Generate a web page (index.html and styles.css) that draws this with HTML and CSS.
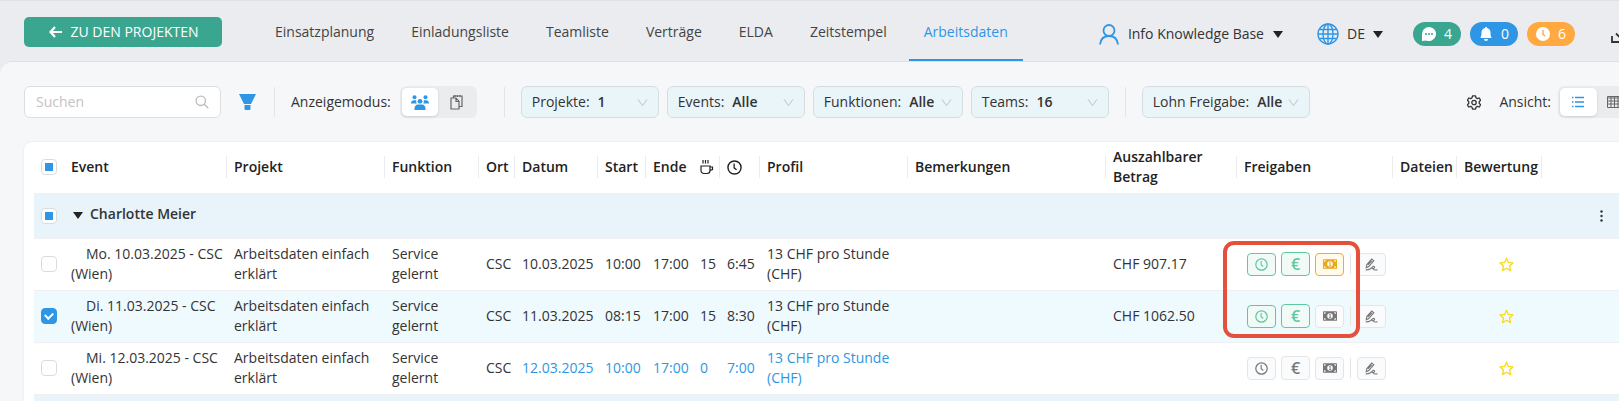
FILE: index.html
```html
<!DOCTYPE html>
<html lang="de">
<head>
    <meta charset="UTF-8">
    <meta name="viewport" content="width=device-width, initial-scale=1.0">
    <title>Arbeitsdaten</title>
    <link rel="stylesheet" href="styles.css">
</head>
<body>

<!-- shared icons -->
<svg class="sprite" aria-hidden="true">
    <symbol id="i-clock" viewBox="0 0 16 16">
        <circle cx="8" cy="8" r="7" fill="none" stroke="currentColor" stroke-width="1.5"/>
        <path d="M7.6 3.8v4.6l2.6 2" fill="none" stroke="currentColor" stroke-width="1.4"/>
    </symbol>
    <symbol id="i-cash" viewBox="0 0 16 11">
        <path fill="currentColor" fill-rule="evenodd" d="M1 0h14a1 1 0 0 1 1 1v9a1 1 0 0 1-1 1H1a1 1 0 0 1-1-1V1a1 1 0 0 1 1-1zM1.3 1.3v1.9a1.9 1.9 0 0 0 1.9-1.9zM14.7 1.3h-1.9a1.9 1.9 0 0 0 1.9 1.9zM1.3 9.7h1.9a1.9 1.9 0 0 0-1.9-1.9zM14.7 9.7V7.8a1.9 1.9 0 0 0-1.9 1.9zM8 2.3a3.2 3.2 0 1 0 0 6.4a3.2 3.2 0 0 0 0-6.4z"/>
        <path d="M7 4.2l1.2-.7v3.500M7 7.200h2.300" fill="none" stroke="currentColor"/>
    </symbol>
    <symbol id="i-sign" viewBox="0 0 16 16">
        <path d="M1.500 12l.8-4L8.300 1.300l2.500 2.200-6.200 7zM3.600 8.500l4.800-5M1 14.600c4 .4 6.200-1.400 8-3.400 1.800-2 3.600-.6 2.400 1-1 1.400-3.200 1.500-2.400-.2M10 14.200c1.500.6 3.500.6 5.500.3" fill="none" stroke="currentColor" stroke-width="1.400"/>
    </symbol>
    <symbol id="i-star" viewBox="0 0 16 16">
        <path d="M8 1.300l2 4.500 4.900.5-3.700 3.300 1.100 4.900L8 12l-4.300 2.500 1.100-4.900L1.100 6.300 6 5.800z" fill="none" stroke="currentColor" stroke-width="1.400" stroke-linejoin="round"/>
    </symbol>
    <symbol id="i-down" viewBox="0 0 12 10">
        <path d="M1 1.500l5 7 5-7" fill="none" stroke="currentColor"/>
    </symbol>
    <symbol id="i-caret" viewBox="0 0 10 7">
        <path d="M0 0h10L5 7z" fill="currentColor"/>
    </symbol>
</svg>

<div class="app">
    <header class="topbar">
        <button class="back" type="button">
            <svg width="13" height="12" viewBox="0 0 13 12"><path d="M6 1L1.500 6 6 11M2 6h11" fill="none" stroke="currentColor" stroke-width="2.200"/></svg>
            ZU DEN PROJEKTEN
        </button>
        <nav class="tabs">
            <a href="#">Einsatzplanung</a>
            <a href="#">Einladungsliste</a>
            <a href="#">Teamliste</a>
            <a href="#">Verträge</a>
            <a href="#">ELDA</a>
            <a href="#">Zeitstempel</a>
            <a href="#" class="active">Arbeitsdaten</a>
        </nav>
        <div class="account">
            <button class="user" type="button">
                <svg class="blue" width="20" height="21" viewBox="0 0 20 21"><g fill="none" stroke="currentColor" stroke-width="1.800"><circle cx="10" cy="6.500" r="5.500"/><path d="M1 20.500c.6-5.300 4-8.500 9-8.500s8.400 3.200 9 8.500"/></g></svg>
                <span>Info Knowledge Base</span>
                <svg class="caret"><use href="#i-caret"/></svg>
            </button>
            <div class="language">
                <svg class="blue" width="22" height="22" viewBox="0 0 22 22"><g fill="none" stroke="currentColor" stroke-width="1.400"><circle cx="11" cy="11" r="10"/><ellipse cx="11" cy="11" rx="5" ry="10"/><path d="M11 1v20M1 11h20M2.500 6.500h17M2.500 15.500h17"/></g></svg>
                <select aria-label="Sprache"><option>DE</option></select>
                <svg class="caret"><use href="#i-caret"/></svg>
            </div>
            <div class="pills">
                <button class="pill green" type="button">
                    <svg width="14" height="14" viewBox="0 0 14 14"><path d="M7 0a7 7 0 1 1-2.800 13.400L0 14V7a7 7 0 0 1 7-7z" fill="#fff"/><path d="M3 6.200h2v1.600H3zM6 6.200h2v1.600H6zM9 6.200h2v1.600H9z" fill="#3aa690"/></svg>
                    4
                </button>
                <button class="pill blue-bg" type="button">
                    <svg width="14" height="14" viewBox="0 0 14 14"><path d="M7 0c.7 0 1 .4 1 1 2.500.6 3.500 2.500 3.500 4.500 0 3 .3 4 1.200 5.500H1.300C2.200 9.500 2.500 8.500 2.500 5.500 2.500 3.500 3.500 1.600 6 1c0-.6.300-1 1-1zM5 12h4a2 2 0 0 1-4 0z" fill="#fff"/></svg>
                    0
                </button>
                <button class="pill orange" type="button">
                    <svg width="14" height="14" viewBox="0 0 14 14"><circle cx="7" cy="7" r="7" fill="#fff"/><path d="M7 3v4.500l2.300 1.700" fill="none" stroke="#ffa940" stroke-width="1.400"/></svg>
                    6
                </button>
            </div>
            <button class="icon-button" type="button" aria-label="Download">
                <svg width="18" height="18" viewBox="0 0 18 18"><path d="M1 11v6h16v-6M9 1v11M5 8.500l4 4 4-4" fill="none" stroke="currentColor" stroke-width="1.800"/></svg>
            </button>
        </div>
    </header>

    <main class="content">
        <div class="toolbar">
            <div class="search">
                <input type="text" placeholder="Suchen" aria-label="Suchen">
                <svg width="14" height="14" viewBox="0 0 14 14"><path d="M9.300 9.300L13.300 13.300M10.500 5.800a4.700 4.700 0 1 1-9.400 0a4.700 4.700 0 0 1 9.400 0z" fill="none" stroke="currentColor" stroke-width="1.300"/></svg>
            </div>
            <button class="icon-button filter blue" type="button" aria-label="Filter">
                <svg width="17" height="16" viewBox="0 0 17 16"><path d="M0 0h17l-5 10H5zM5.500 11h6v4a1 1 0 0 1-1 1h-4a1 1 0 0 1-1-1z" fill="currentColor"/></svg>
            </button>
            <span class="divider"></span>
            <span class="mode-label">Anzeigemodus:</span>
            <div class="segmented">
                <button class="on" type="button" aria-label="Mitarbeiter">
                    <svg width="18" height="15" viewBox="0 0 18 15" fill="currentColor"><circle cx="3.500" cy="2.300" r="2"/><circle cx="14.500" cy="2.300" r="2"/><circle cx="9" cy="6.300" r="2.400"/><path d="M0 8.500C0 6.500 1 5.200 2.800 5.200h2.500c-.3 1.400 0 2.500.5 3.300zM18 8.500c0-2-1-3.300-2.800-3.300h-2.500c.3 1.400 0 2.500-.5 3.300zM3.500 15v-1.500c0-2.300 1.300-4 3.500-4h4c2.200 0 3.500 1.700 3.500 4V15z"/></svg>
                </button>
                <button type="button" aria-label="Projekte">
                    <svg width="13" height="15" viewBox="0 0 13 15"><path d="M1 3h5l3 3.200V14H1zM3.500 3V1H12v10.500H9M6 3v3.500h3M5 0v2M7.500 0v2M10 0v2" fill="none" stroke="currentColor" stroke-width="1.200"/></svg>
                </button>
            </div>
            <span class="divider wide"></span>
            <div class="picks">
                <div class="pick"><label for="projects">Projekte:</label><select id="projects"><option>1</option></select><svg><use href="#i-down"/></svg></div>
                <div class="pick"><label for="events">Events:</label><select id="events"><option>Alle</option></select><svg><use href="#i-down"/></svg></div>
                <div class="pick tight"><label for="functions">Funktionen:</label><select id="functions"><option>Alle</option></select><svg><use href="#i-down"/></svg></div>
                <div class="pick"><label for="teams">Teams:</label><select id="teams"><option>16</option></select><svg><use href="#i-down"/></svg></div>
            </div>
            <span class="divider"></span>
            <div class="pick pay"><label for="pay">Lohn Freigabe:</label><select id="pay"><option>Alle</option></select><svg><use href="#i-down"/></svg></div>
            <div class="view">
                <button class="icon-button" type="button" aria-label="Einstellungen">
                    <svg width="14" height="15" viewBox="0 0 14 15"><g fill="none" stroke="currentColor" stroke-width="1.300" stroke-linejoin="round"><path d="M5.500.8h3l.5 2 1.300.8 2-.6 1.300 2.300-1.400 1.400v1.600l1.400 1.400-1.300 2.300-2-.6-1.300.8-.5 2h-3l-.5-2-1.300-.8-2 .6L.4 9.700l1.400-1.400V6.700L.4 5.300 1.700 3l2 .6L5 2.800z"/><circle cx="7" cy="7.500" r="2.200"/></g></svg>
                </button>
                <span>Ansicht:</span>
                <div class="segmented">
                    <button class="on" type="button" aria-label="Liste">
                        <svg width="12" height="12" viewBox="0 0 12 12"><path d="M0 1.500h1.500M3 1.500h9M0 6h1.500M3 6h9M0 10.500h1.500M3 10.500h9" stroke="currentColor" stroke-width="1.300"/></svg>
                    </button>
                    <button type="button" aria-label="Tabelle">
                        <svg width="15" height="12" viewBox="0 0 15 12"><path d="M.5.500h14v11H.5zM.5 2h14M.5 5h14M.5 8h14M4 1v10.500M7.500 1v10.500M11 1v10.500" fill="none" stroke="currentColor"/></svg>
                    </button>
                </div>
            </div>
        </div>

        <div class="card">
            <table>
                <colgroup>
                    <col class="c-check"><col class="c-event"><col class="c-project"><col class="c-function"><col class="c-place"><col class="c-date"><col class="c-start"><col class="c-end"><col class="c-break"><col class="c-hours"><col class="c-profile"><col class="c-notes"><col class="c-amount"><col class="c-release"><col class="c-files"><col class="c-rating"><col>
                </colgroup>
                <thead>
                    <tr>
                        <th class="plain check"><input type="checkbox" class="partial" aria-label="Alle auswählen"></th>
                        <th>Event</th>
                        <th>Projekt</th>
                        <th>Funktion</th>
                        <th>Ort</th>
                        <th>Datum</th>
                        <th>Start</th>
                        <th class="plain">Ende</th>
                        <th aria-label="Pause"><svg width="14" height="15" viewBox="0 0 14 15"><path d="M1 6h9v4.500a3 3 0 0 1-3 3H4a3 3 0 0 1-3-3zM10 7h2.500v2.500L10 10.500M3 0v3.500M5.500 0v3.500M8 0v3.500" fill="none" stroke="currentColor" stroke-width="1.200"/></svg></th>
                        <th aria-label="Dauer"><svg width="15" height="15"><use href="#i-clock"/></svg></th>
                        <th>Profil</th>
                        <th>Bemerkungen</th>
                        <th>Auszahlbarer Betrag</th>
                        <th>Freigaben</th>
                        <th>Dateien</th>
                        <th>Bewertung</th>
                        <th class="plain"></th>
                    </tr>
                </thead>
                <tbody>
                    <tr class="group">
                        <td class="check"><input type="checkbox" class="partial" aria-label="Charlotte Meier"></td>
                        <td colspan="15"><button class="toggle" type="button"><svg class="caret"><use href="#i-caret"/></svg>Charlotte Meier</button></td>
                        <td class="more"><button class="icon-button" type="button" aria-label="Mehr"><svg width="3" height="12" viewBox="0 0 3 12" fill="currentColor"><circle cx="1.500" cy="1.500" r="1.200"/><circle cx="1.500" cy="6" r="1.200"/><circle cx="1.500" cy="10.500" r="1.200"/></svg></button></td>
                    </tr>
                    <tr>
                        <td class="check"><input type="checkbox" aria-label="10.03.2025"></td>
                        <td class="event">Mo. 10.03.2025 - CSC (Wien)</td>
                        <td>Arbeitsdaten einfach erklärt</td>
                        <td>Service gelernt</td>
                        <td>CSC</td>
                        <td>10.03.2025</td>
                        <td>10:00</td>
                        <td>17:00</td>
                        <td>15</td>
                        <td>6:45</td>
                        <td>13 CHF pro Stunde (CHF)</td>
                        <td></td>
                        <td>CHF 907.17</td>
                        <td>
                            <div class="release">
                                <button class="ok" type="button" aria-label="Zeit"><svg width="13" height="13"><use href="#i-clock"/></svg></button>
                                <button class="ok euro" type="button">€</button>
                                <button class="paid" type="button" aria-label="Auszahlung"><svg width="14" height="10"><use href="#i-cash"/></svg></button>
                                <span class="sep"></span>
                                <button type="button" aria-label="Unterschrift"><svg width="13" height="13"><use href="#i-sign"/></svg></button>
                                <span class="marker"></span>
                            </div>
                        </td>
                        <td></td>
                        <td class="rating"><svg width="15" height="15"><use href="#i-star"/></svg></td>
                        <td></td>
                    </tr>
                    <tr class="selected">
                        <td class="check"><input type="checkbox" checked aria-label="11.03.2025"></td>
                        <td class="event">Di. 11.03.2025 - CSC (Wien)</td>
                        <td>Arbeitsdaten einfach erklärt</td>
                        <td>Service gelernt</td>
                        <td>CSC</td>
                        <td>11.03.2025</td>
                        <td>08:15</td>
                        <td>17:00</td>
                        <td>15</td>
                        <td>8:30</td>
                        <td>13 CHF pro Stunde (CHF)</td>
                        <td></td>
                        <td>CHF 1062.50</td>
                        <td>
                            <div class="release">
                                <button class="ok" type="button" aria-label="Zeit"><svg width="13" height="13"><use href="#i-clock"/></svg></button>
                                <button class="ok euro" type="button">€</button>
                                <button type="button" aria-label="Auszahlung"><svg width="14" height="10"><use href="#i-cash"/></svg></button>
                                <span class="sep"></span>
                                <button type="button" aria-label="Unterschrift"><svg width="13" height="13"><use href="#i-sign"/></svg></button>
                            </div>
                        </td>
                        <td></td>
                        <td class="rating"><svg width="15" height="15"><use href="#i-star"/></svg></td>
                        <td></td>
                    </tr>
                    <tr>
                        <td class="check"><input type="checkbox" aria-label="12.03.2025"></td>
                        <td class="event">Mi. 12.03.2025 - CSC (Wien)</td>
                        <td>Arbeitsdaten einfach erklärt</td>
                        <td>Service gelernt</td>
                        <td>CSC</td>
                        <td class="edit">12.03.2025</td>
                        <td class="edit">10:00</td>
                        <td class="edit">17:00</td>
                        <td class="edit">0</td>
                        <td class="edit">7:00</td>
                        <td class="edit">13 CHF pro Stunde (CHF)</td>
                        <td></td>
                        <td></td>
                        <td>
                            <div class="release">
                                <button type="button" aria-label="Zeit"><svg width="13" height="13"><use href="#i-clock"/></svg></button>
                                <button class="euro" type="button">€</button>
                                <button type="button" aria-label="Auszahlung"><svg width="14" height="10"><use href="#i-cash"/></svg></button>
                                <span class="sep"></span>
                                <button type="button" aria-label="Unterschrift"><svg width="13" height="13"><use href="#i-sign"/></svg></button>
                            </div>
                        </td>
                        <td></td>
                        <td class="rating"><svg width="15" height="15"><use href="#i-star"/></svg></td>
                        <td></td>
                    </tr>
                    <tr class="group">
                        <td colspan="17"></td>
                    </tr>
                </tbody>
            </table>
        </div>
    </main>
</div>

</body>
</html>
```
FILE: styles.css
```css
* {
    box-sizing: border-box;
}

body {
    margin: 0;
    overflow: hidden;
    background: #ebecf0;
    color: #333;
    font-family: "Open Sans", "Noto Sans", sans-serif;
    font-size: 14px;
    line-height: 20px;
}

button, input, select {
    font: inherit;
    color: inherit;
    margin: 0;
}

button {
    display: flex;
    align-items: center;
    justify-content: center;
    padding: 0;
    border: 0;
    background: none;
}

select {
    appearance: none;
    border: 0;
    padding: 0;
    background: none;
}

svg {
    display: block;
    flex: none;
}

.sprite {
    position: absolute;
    width: 0;
    height: 0;
}

.blue {
    color: #2e96e5;
}

.caret {
    width: 10px;
    height: 7px;
    color: #222;
}

/* the app is a bit wider than the window, the rest is cut off */
.app {
    display: flex;
    flex-direction: column;
    width: calc(100% + 40px);
    height: 100vh;
    overflow: hidden;
}

.topbar {
    display: flex;
    flex: none;
    align-items: center;
    height: 61px;
    padding: 0 24px;
    border-top: 1px solid #dfe2e3;
}

.back {
    width: 198px;
    height: 30px;
    gap: 8px;
    margin-top: 2px;
    padding-left: 2px;
    border-radius: 5px;
    background: #3aa690;
    color: #fff;
    font-weight: 500;
}

.tabs {
    display: flex;
    align-self: stretch;
    gap: 7px;
    margin-left: 38px;
}

.tabs a {
    padding: 21px 15px 0;
    color: #444;
    text-decoration: none;
}

.tabs .active {
    color: #2e96e5;
    border-bottom: 2px solid #2e96e5;
}

.account {
    display: flex;
    align-items: center;
    margin: 0 6px 0 auto;
    padding-top: 6px;
}

.user {
    gap: 9px;
}

.language {
    display: flex;
    align-items: center;
    gap: 8px;
    margin-left: 34px;
}

.pills {
    display: flex;
    gap: 9px;
    margin: 0 36px 0 30px;
}

.pill {
    width: 48px;
    height: 24px;
    gap: 8px;
    border-radius: 12px;
    color: #fff;
}

.green {
    background: #3aa690;
}

.blue-bg {
    background: #2e96e5;
}

.orange {
    background: #ffa940;
}

.content {
    flex: 1;
    min-height: 0;
    overflow: hidden;
    padding: 24px 24px 0;
    border-top: 1px solid #dfe0e3;
    border-radius: 12px 0 0 0;
    background: #f6f7f9;
}

.toolbar {
    display: flex;
    align-items: center;
    height: 32px;
    margin-bottom: 24px;
}

.search {
    display: flex;
    align-items: center;
    width: 197px;
    height: 32px;
    padding: 0 11px;
    border: 1px solid #dcdee0;
    border-radius: 6px;
    background: #fff;
    color: #bbb;
}

.search input {
    flex: 1;
    min-width: 0;
    padding: 0;
    border: 0;
    background: none;
    color: #333;
}

.search input::placeholder {
    color: #c3c3c3;
}

.filter {
    margin: 0 18px;
}

.divider {
    width: 1px;
    height: 30px;
    background: #e2e4e6;
}

.divider.wide {
    margin: 0 16px 0 27px;
}

.mode-label {
    margin: 0 9px 0 16px;
}

.segmented {
    display: flex;
    width: 77px;
    height: 32px;
    padding: 2px;
    border-radius: 6px;
    background: #ebecee;
    color: #666;
}

.segmented button {
    flex: 1;
}

.segmented .on {
    border-radius: 5px;
    background: #fff;
    box-shadow: 0 1px 3px rgba(0, 0, 0, 0.12);
    color: #2e96e5;
}

.picks {
    display: flex;
    gap: 8px;
    margin-right: 16px;
}

.pick {
    display: flex;
    align-items: center;
    width: 138px;
    height: 32px;
    padding: 0 10px;
    border: 1px solid #d6dde1;
    border-radius: 6px;
    background: #eaf5fa;
}

.pick.tight {
    width: 150px;
}

.pick.pay {
    width: 168px;
    margin-left: 16px;
}

.pick select {
    margin-left: 8px;
    font-weight: 600;
}

.pick svg {
    width: 11px;
    height: 9px;
    margin-left: auto;
    color: #b4bcc2;
}

.view {
    display: flex;
    align-items: center;
    margin-left: auto;
}

.view span {
    margin: 0 7px 0 18px;
}

.card {
    padding: 0 10px;
    border-radius: 8px;
    background: #fff;
    box-shadow: 0 0 2px rgba(0, 0, 0, 0.1);
}

table {
    width: 100%;
    table-layout: fixed;
    border-collapse: collapse;
}

.c-check { width: 30px; }
.c-event { width: 163px; }
.c-project { width: 158px; }
.c-function { width: 94px; }
.c-place { width: 36px; }
.c-date { width: 83px; }
.c-start { width: 48px; }
.c-end { width: 47px; }
.c-break { width: 27px; }
.c-hours { width: 40px; }
.c-profile { width: 148px; }
.c-notes { width: 198px; }
.c-amount { width: 131px; }
.c-release { width: 156px; }
.c-files { width: 64px; }
.c-rating { width: 85px; }

th, td {
    height: 52px;
    padding: 0 0 0 7px;
    border-bottom: 1px solid #eef0f2;
    text-align: left;
    vertical-align: middle;
}

th {
    height: 51px;
    background: linear-gradient(#ececee, #ececee) right center / 1px 22px no-repeat;
    color: #222;
    font-weight: 600;
}

th.plain {
    background: none;
}

.event {
    text-indent: 15px;
}

.edit {
    color: #2e96e5;
}

.group td {
    height: 45px;
    background: #e9f4fa;
}

.selected td {
    background: #effaff;
}

.toggle {
    gap: 7px;
    padding: 0 2px 4px;
    font-weight: 600;
}

.toggle .caret {
    margin-top: 4px;
}

.more {
    padding-left: 58px;
}

input[type="checkbox"] {
    display: block;
    appearance: none;
    width: 16px;
    height: 16px;
    border: 1px solid #d9dcdf;
    border-radius: 4px;
    background: #fff;
}

input.partial {
    background: linear-gradient(#2e96e5, #2e96e5) center / 8px 8px no-repeat #fff;
}

input[type="checkbox"]:checked {
    position: relative;
    border-color: #2e96e5;
    background: #2e96e5;
}

input[type="checkbox"]:checked::after {
    content: "";
    position: absolute;
    left: 4px;
    top: 2px;
    width: 4px;
    height: 6px;
    border: solid #fff;
    border-width: 0 2px 2px 0;
    transform: rotate(45deg);
}

.release {
    position: relative;
    display: flex;
    align-items: center;
    gap: 5px;
    padding-left: 3px;
}

.release button {
    width: 29px;
    height: 23px;
    border: 1px solid #e3e5e8;
    border-radius: 4px;
    background: #fafbfd;
    color: #777;
}

.release .euro {
    height: 24px;
    font-size: 16px;
    font-weight: 600;
}

.release .ok {
    border-color: #5cc9a0;
    background: #f2faf7;
    color: #5cc9a0;
}

.release .paid {
    border-color: #e8b030;
    background: #fffaea;
    color: #e8a820;
}

.sep {
    width: 1px;
    height: 20px;
    margin: 0 1px;
    background: #e2e4e8;
}

/* red frame over the approvals of two rows */
.marker {
    position: absolute;
    z-index: 1;
    left: -21px;
    top: -11px;
    width: 137px;
    height: 97px;
    border: 4px solid #e5503c;
    border-radius: 11px;
    pointer-events: none;
}

.rating svg {
    margin-left: 35px;
    color: #fadb14;
}
```
